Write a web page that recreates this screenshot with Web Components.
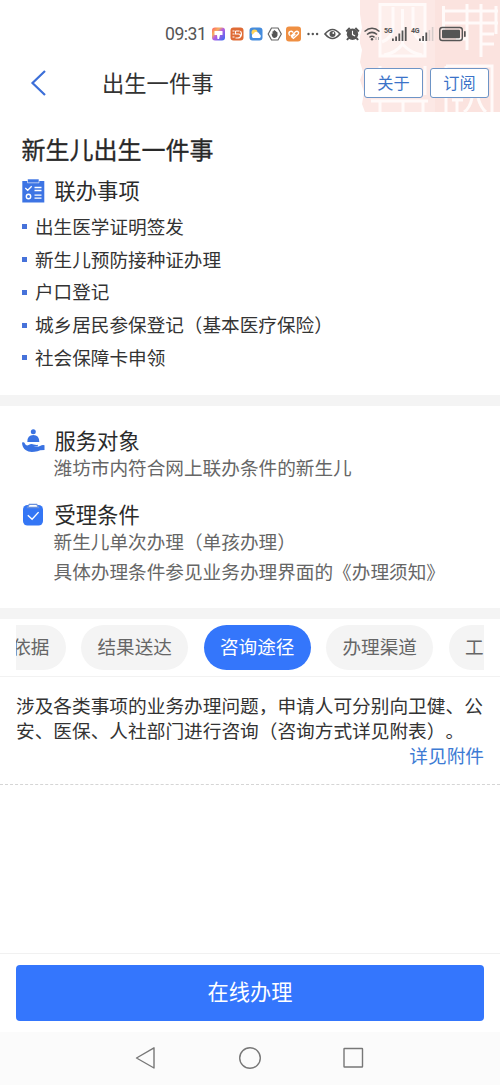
<!DOCTYPE html>
<html lang="zh-CN">
<head>
<meta charset="utf-8">
<title>出生一件事</title>
<style>
html,body{margin:0;padding:0;background:#fff}
body{font-family:"Noto Sans CJK SC","Noto Sans",sans-serif;color:#2b2b2b;text-spacing-trim:space-all}
</style>
</head>
<body>
<service-page></service-page>
<script>
function define(name, css, html){
  customElements.define(name, class extends HTMLElement{
    constructor(){
      super();
      const t=document.createElement('template');
      t.innerHTML='<style>*{box-sizing:border-box}svg{display:block}'+css+'</style>'+html;
      this.attachShadow({mode:'open'}).appendChild(t.content.cloneNode(true));
    }
  });
}

define('seal-mark',
`:host{display:block;width:140px;height:114px}`,
`<svg width="140" height="114" viewBox="0 0 140 114" fill="none">
<path d="M0 0H140V112H5L2 104 4 92 0 80 3 72 0 62 2 50-1 40 2 28 0 14Z" fill="#fce8e5"/>
<path d="M75 0H140V112H75Z" fill="#fbe3df"/>
<g stroke="#fffaf9" stroke-width="3">
<path d="M20 4.500H65V56H20Z" fill="#fdefec"/>
<path d="M33 7V28Q32 38 22 42M42.500 9V45M53 7V28Q54 38 64 42M24 55Q36 53 42.500 44 50 53 62 55"/>
<path d="M20 66V95M65 66V95M11 101H68M20 101V112M43 101V112M63 101V112"/>
<path d="M83 11H138M83 23H138M83.500 6V34M136 6V34M107 4V50M121 4V57M107 39H96M121 34H134M121 44H134"/>
<path d="M86 66H132V112M86 66V112M92 100H103M97 100V112M104 112Q110 108 112 98M118 98Q121 108 126 112"/>
</g></svg>`);

define('status-bar',
`:host{display:block;height:50px;position:relative}
.row{display:flex;align-items:center;padding:17px 0 0 165px;height:51px}
.time{font:17.6px/20px Roboto,"Noto Sans",sans-serif;color:#555;width:47px;letter-spacing:-.5px;white-space:nowrap}
.sys{flex:none}`,
`<div class="row"><span class="time">09:31</span>
<svg class="sys" width="260" height="24" viewBox="212 22 260 24">
<defs><linearGradient id="g" x1="0" y1="0" x2="1" y2="1"><stop offset="0" stop-color="#ff5966"/><stop offset=".3" stop-color="#f7b05c"/><stop offset=".5" stop-color="#b55de0"/><stop offset="1" stop-color="#346cf5"/></linearGradient></defs>
<rect x="212" y="27.500" width="13" height="13" rx="3" fill="url(#g)"/><path d="M214.500 31h8v4h-2.500l-1 4h-1.500l-.5-4h-2.500z" fill="#fff"/>
<rect x="230.500" y="27.500" width="13" height="13" rx="3" fill="#df6b35"/><path d="M232.500 31h2m-2 3h2m-2 3h2m1-6h4m-4 0v3h3q2 0 2 2t-3 2h-2m5-7q2 3 0 6" stroke="#fff" stroke-width="1.100" fill="none"/>
<rect x="249.500" y="27.500" width="13" height="13" rx="3" fill="#458cdd"/><circle cx="254.500" cy="32.500" r="3" fill="#ffd45a"/><path d="M253 38a2.500 2.500 0 0 1 .7-4.500 3.200 3.200 0 0 1 5.900.8A2 2 0 0 1 259.500 38z" fill="#fff"/>
<path d="M271.500 28h6.500l3.300 6-3.300 6h-6.500l-3.300-6z" fill="#fff" stroke="#666" stroke-width="1.200"/><path d="M271.500 33.500l1 .4v-2.500q.7-1 1.200 0v-1q.7-1 1.300 0v.6q.8-.8 1.300.3v.8q1-.5 1.200.5v3q-.5 2.400-3 2.400t-3-4.500z" fill="#555"/>
<rect x="286" y="26.500" width="15" height="15" rx="3" fill="#ef8f42"/><path d="M290 35.500l-.7-.9q-1-1.900.5-3 1.700-.9 2.900.4l.5.500M290.800 36.200l5-4.600q1.300-.9 2.300.2t.1 2.200l-4.800 4.400-1.500-1.300 3.400-3.200" fill="none" stroke="#fff" stroke-width="1.400"/>
<g fill="#555"><circle cx="308.500" cy="34" r="1.200"/><circle cx="312.800" cy="34" r="1.200"/><circle cx="317.100" cy="34" r="1.200"/></g>
<path d="M325 34q7.500-9 15 0-7.500 9-15 0z" fill="none" stroke="#555" stroke-width="1.700"/><circle cx="332.500" cy="34" r="3" fill="#555"/><circle cx="333.300" cy="33" r=".9" fill="#fff"/>
<circle cx="352.500" cy="34.200" r="5.700" fill="#555"/><path d="M346.300 31.500l3.500-3.500m5.500 0 3.500 3.500M348.500 38l-1.500 2m9.500-2 1.500 2" stroke="#555" stroke-width="2"/><path d="M352.500 30.800v3.800l2.600 1.500" fill="none" stroke="#fff" stroke-width="1.100"/>
<g fill="none" stroke="#555" stroke-width="1.500"><path d="M364.500 31.500q7.500-6.500 15 0M367 34.500q5-4.300 10 0M369.500 37.300q2.500-2 5 0"/></g><circle cx="372" cy="39.300" r="1.200" fill="#555"/><path d="M376 37v3m2.500-3v3" stroke="#aaa"/>
<g font-family="Roboto,sans-serif" font-size="7" font-weight="700" fill="#555"><text x="384" y="32.800" textLength="8.500">5G</text><text x="411" y="32.800" textLength="8.500">4G</text></g>
<g fill="#555"><rect x="392" y="38.500" width="1.800" height="2.500"/><rect x="395.200" y="36.500" width="1.800" height="4.500"/><rect x="398.400" y="33.500" width="1.800" height="7.500"/><rect x="401.600" y="30.500" width="1.800" height="10.500"/><rect x="404.800" y="27" width="1.800" height="14"/>
<rect x="419" y="38.500" width="1.800" height="2.500"/><rect x="422.200" y="36" width="1.800" height="5"/><rect x="425.400" y="32.500" width="1.800" height="8.500"/></g><g fill="#d6cccb"><rect x="428.600" y="30" width="1.600" height="11"/><rect x="431.800" y="27" width="1.600" height="14"/></g>
<rect x="439.800" y="27.500" width="22.500" height="13" rx="2.500" fill="none" stroke="#555" stroke-width="1.400"/><rect x="442" y="29.700" width="18" height="8.600" rx="1" fill="#555"/><rect x="464" y="31" width="1.700" height="6" rx=".8" fill="#555"/>
</svg></div>`);

define('outline-button',
`:host{display:block;width:59px;height:30px;border:1px solid #6d94c6;border-radius:3px;background:#fff;color:#3b73c8;font-size:16.2px;line-height:27px;text-align:center}`,
`<slot></slot>`);

define('nav-header',
`:host{display:flex;position:relative;height:65px;align-items:center;padding:0 11px 0 30px}
.t{font-size:22.3px;line-height:32px;margin-left:54px;flex:1;color:#333;padding-bottom:2px}
.b{display:flex;gap:7px}`,
`<svg width="18" height="28" viewBox="0 0 18 28"><path d="M15 2 2.500 14 15 26" fill="none" stroke="#3c6fd8" stroke-width="2.200"/></svg>
<div class="t">出生一件事</div><div class="b"><outline-button>关于</outline-button><outline-button>订阅</outline-button></div>`);

define('icon-title',
`:host{display:flex;align-items:center;height:32px;font-size:21.3px;line-height:32px;color:#2b2b2b}
.i{width:33px;flex:none}
.x{padding-bottom:2px}`,
`<div class="i"><slot name="icon"></slot></div><span class="x"><slot></slot></span>`);

define('bullet-item',
`:host{display:flex;align-items:center;height:32.75px;font-size:18.62px;line-height:28px;color:#333}
i{width:5px;height:5px;background:#4672da;margin-right:8.500px}
span{padding-bottom:2px}`,
`<i></i><span><slot></slot></span>`);

define('detail-line',
`:host{display:block;font-size:18.65px;line-height:30px;color:#666;padding-left:32px;white-space:nowrap}`,
`<slot></slot>`);

define('section-gap',`:host{display:block;height:10.500px;background:#f4f4f4}`,``);

define('tab-pill',
`:host{display:block;flex:none;height:45px;border-radius:23px;background:#f4f4f4;color:#666;font-size:18.6px;line-height:42px;padding:0 16.300px;white-space:nowrap}
:host([active]){background:#3476fb;color:#fff}
:host([edge="start"]){border-radius:0 23px 23px 0}
:host([edge="end"]){border-radius:23px 0 0 23px}`,
`<slot></slot>`);

define('tab-strip',
`:host{display:block;height:58px;padding:6px 16px 0;border-bottom:1px solid #f2f2f2}
.clip{overflow:hidden;display:flex}
.track{display:flex;gap:15.500px;margin-left:-20.100px}`,
`<div class="clip"><div class="track"><slot></slot></div></div>`);

define('consult-text',
`:host{display:block;height:108px;padding:15.500px 16px 0;font-size:18.68px;line-height:25px;color:#333;border-bottom:1px dashed #d5d5d5}
p{margin:0;white-space:nowrap}.l{text-align:right;color:#3d7bd4}`,
`<p>涉及各类事项的业务办理问题，申请人可分别向卫健、公<br>安、医保、人社部门进行咨询（咨询方式详见附表）。</p><p class="l">详见附件</p>`);

define('action-bar',
`:host{display:block;height:79px;border-top:1px solid #f1f1f1;padding:11px 16px 0}
button{display:block;width:100%;height:56px;border:0;border-radius:4px;background:#3476fd;color:#fff;font:21.2px/32px "Noto Sans CJK SC",sans-serif;padding:0 0 4px}`,
`<button><slot></slot></button>`);

define('system-nav',
`:host{display:block;height:53px;background:#fbfbfb}`,
`<svg width="500" height="53" viewBox="0 0 500 53" fill="none" stroke="#777" stroke-width="1.400" stroke-linejoin="round"><path d="M154 15.800V36L136.500 26Z"/><circle cx="250" cy="26" r="10.300"/><rect x="344" y="16.500" width="18.500" height="18.500" rx=".5"/></svg>`);

define('service-page',
`:host{display:flex;flex-direction:column;width:500px;height:1085px;position:relative;background:#fff;overflow:hidden}
seal-mark{position:absolute;left:360px;top:0}
.a{height:280px;padding:18px 21.500px 0}
h1{margin:0;font-size:24px;line-height:32px;font-weight:400;-webkit-text-stroke:.3px #282828;height:41.500px;color:#282828}
.list{margin-top:4.100px}
.b{height:202.500px;padding:19px 21.500px 0}
.b .second{margin-top:17px}
.b .up{margin-top:-5px}
.fill{flex:1}`,
`<seal-mark></seal-mark>
<status-bar></status-bar>
<nav-header></nav-header>
<div class="a"><h1>新生儿出生一件事</h1>
<icon-title><svg slot="icon" width="23" height="24" viewBox="0 0 23 24"><path d="M.3 2H22.300V23.500H.3Z" fill="#3d74e4"/><path d="M5.500 0H17V3.800H5.500Z" fill="#3d74e4" stroke="#fff" stroke-width=".6"/><path d="M3.300 9l2.400 2.300 4-4M12.500 8.500h7M12.500 11.500h7M12.500 16.200h7M12.500 19.200h7" fill="none" stroke="#fff" stroke-width="1.300"/><circle cx="6.500" cy="17.500" r="2.200" fill="none" stroke="#fff" stroke-width="1.400"/></svg>联办事项</icon-title>
<div class="list"><bullet-item>出生医学证明签发</bullet-item><bullet-item>新生儿预防接种证办理</bullet-item><bullet-item>户口登记</bullet-item><bullet-item>城乡居民参保登记（基本医疗保险）</bullet-item><bullet-item>社会保障卡申领</bullet-item></div></div>
<section-gap></section-gap>
<div class="b">
<icon-title><svg slot="icon" width="23" height="24" viewBox="0 0 23 24" fill="#3972e2"><circle cx="11.300" cy="2.700" r="2.500"/><path d="M5.300 13Q5.300 6 11.300 6T17.300 13Z"/><path d="M0 13.500l2-.2q2 4.200 4.700 2.700 2.500-1.500 5-.5 2.500.8 4 .2l.3 1.500-4.500.7q4 .5 6.500-.9 2.500-1.500 4.500-.7v4.700q-5 0-7 1.300-8 2-11.500-1Q.2 19 0 13.500z"/></svg>服务对象</icon-title>
<detail-line class="up">潍坊市内符合网上联办条件的新生儿</detail-line>
<icon-title class="second"><svg slot="icon" width="23" height="24" viewBox="0 0 23 24"><rect x="1" y="2" width="20" height="20.500" rx="4.500" fill="#3476f5"/><path d="M5.500 4.500 7.300 1.300h7.400l1.800 3.200z" fill="#fff" stroke="#6a91dc" stroke-width="1.300"/><path d="M5.800 12.300l4.300 4 6.500-7.200" fill="none" stroke="#fff" stroke-width="1.400"/></svg>受理条件</icon-title>
<detail-line class="up">新生儿单次办理（单孩办理）</detail-line><detail-line>具体办理条件参见业务办理界面的《办理须知》</detail-line>
</div>
<section-gap></section-gap>
<tab-strip><tab-pill edge="start">依据</tab-pill><tab-pill>结果送达</tab-pill><tab-pill active>咨询途径</tab-pill><tab-pill>办理渠道</tab-pill><tab-pill edge="end">工</tab-pill></tab-strip>
<consult-text></consult-text>
<div class="fill"></div>
<action-bar>在线办理</action-bar>
<system-nav></system-nav>`);
</script>
</body>
</html>
